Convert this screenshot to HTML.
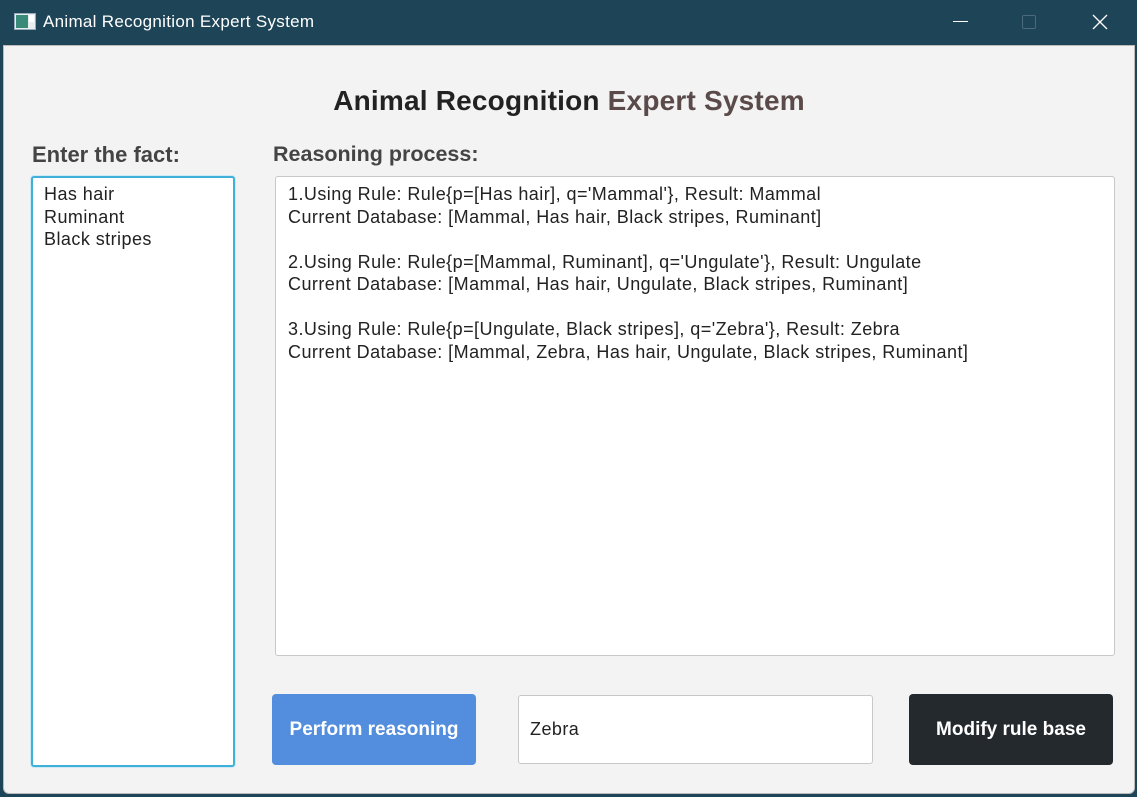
<!DOCTYPE html>
<html><head><style>
*{margin:0;padding:0;box-sizing:border-box}
body{width:1137px;height:797px;background:#1d4457;position:relative;overflow:hidden;font-family:"Liberation Sans",sans-serif}
.tb{position:absolute;left:0;top:0;width:1137px;height:45px;color:#fff;font-size:17px}
.main{position:absolute;left:3px;top:45px;width:1132px;height:749px;background:#f3f3f3;border:1px solid #bbb;border-bottom-left-radius:6px;border-bottom-right-radius:6px}
.abs{position:absolute}
.lbl{font-weight:bold;font-size:21.5px;color:#444}
.box{background:#fff;border:1px solid #c8c8c8;border-radius:3px}
.txt{font-size:18px;letter-spacing:0.45px;color:#222;line-height:22.5px;white-space:pre}
.btn{border-radius:4px;color:#fff;font-weight:bold;font-size:19px;display:flex;align-items:center;justify-content:center}
</style></head><body>
<div class="tb">
 <svg class="abs" style="left:14px;top:13px" width="22" height="17"><rect x="0.5" y="0.5" width="21" height="16" fill="#e8eef0" stroke="#9ab"/><rect x="2" y="2" width="12" height="13" fill="#3a8a7a"/><rect x="15" y="2" width="5" height="7" fill="#fff"/></svg>
 <div class="abs" style="left:43px;top:12px;letter-spacing:0.3px">Animal Recognition Expert System</div>
 <div class="abs" style="left:953px;top:21px;width:15px;height:1px;background:#fff"></div>
 <div class="abs" style="left:1022px;top:15px;width:14px;height:14px;border:1px solid #4b6b7c;border-radius:2px"></div>
 <svg class="abs" style="left:1092px;top:14px" width="16" height="16"><path d="M1 1L15 15M15 1L1 15" stroke="#fff" stroke-width="1.3"/></svg>
</div>
<div class="main">
 <div class="abs" style="left:0;width:1130px;top:39px;text-align:center;font-weight:bold;font-size:28px;letter-spacing:0.2px;color:#222">Animal Recognition <span style="color:#5a4a4a">Expert System</span></div>
 <div class="abs lbl" style="left:28px;top:96px;font-size:22px">Enter the fact:</div>
 <div class="abs lbl" style="left:269px;top:96px">Reasoning process:</div>
 <div class="abs box txt" style="left:27px;top:130px;width:204px;height:591px;border:2px solid #3fb0d8;padding:5px 0 0 11px;box-shadow:0 0 0 1px #cfeaf5">Has hair
Ruminant
Black stripes</div>
 <div class="abs box txt" style="left:271px;top:130px;width:840px;height:480px;padding:6px 0 0 12px">1.Using Rule: Rule{p=[Has hair], q='Mammal'}, Result: Mammal
Current Database: [Mammal, Has hair, Black stripes, Ruminant]

2.Using Rule: Rule{p=[Mammal, Ruminant], q='Ungulate'}, Result: Ungulate
Current Database: [Mammal, Has hair, Ungulate, Black stripes, Ruminant]

3.Using Rule: Rule{p=[Ungulate, Black stripes], q='Zebra'}, Result: Zebra
Current Database: [Mammal, Zebra, Has hair, Ungulate, Black stripes, Ruminant]</div>
 <div class="abs btn" style="left:268px;top:648px;width:204px;height:71px;background:#538ddd">Perform reasoning</div>
 <div class="abs box txt" style="left:514px;top:649px;width:355px;height:69px;padding:22px 0 0 11px">Zebra</div>
 <div class="abs btn" style="left:905px;top:648px;width:204px;height:71px;background:#24292e">Modify rule base</div>
</div>
</body></html>
